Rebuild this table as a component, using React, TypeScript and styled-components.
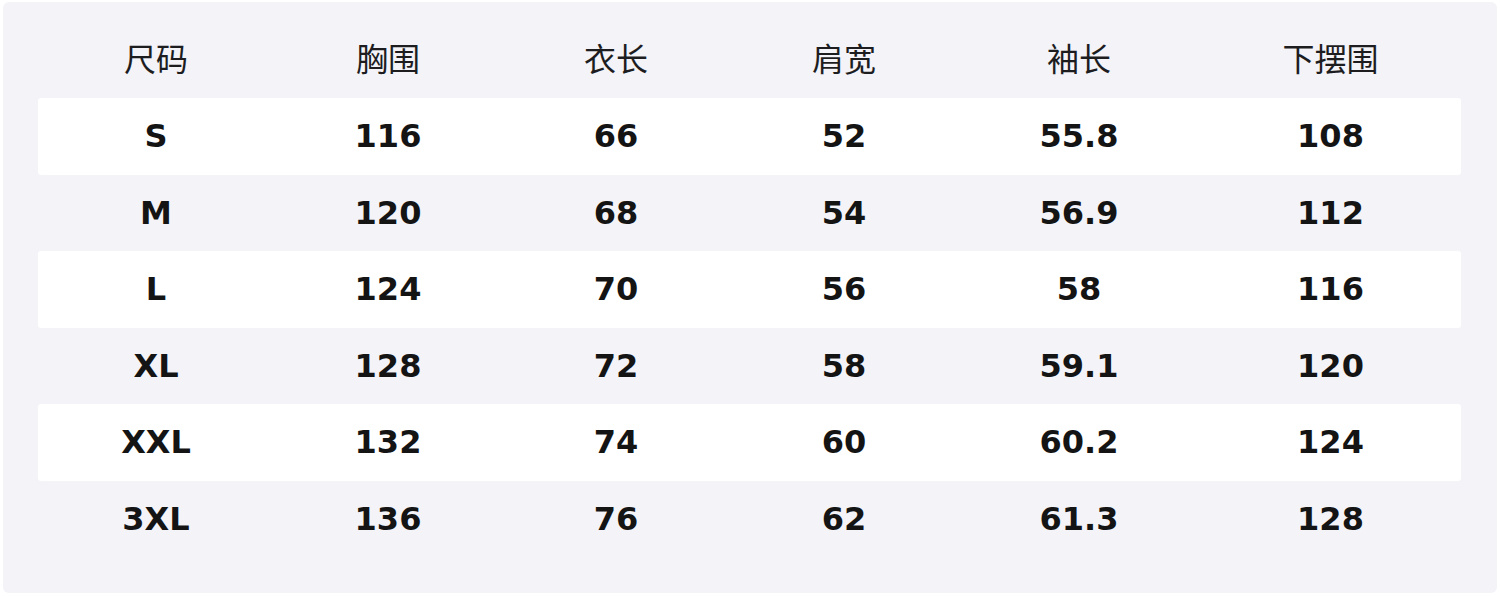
import styled, { createGlobalStyle } from 'styled-components';

const GlobalStyle = createGlobalStyle`
  html, body {
    margin: 0;
    padding: 0;
    background: #ffffff;
  }
`;

const Page = styled.div`
  width: 1500px;
  height: 596px;
  padding: 2px 3px 3px 3px;
  box-sizing: border-box;
`;

const Panel = styled.div`
  height: 100%;
  box-sizing: border-box;
  background: #f3f3f8;
  border-radius: 6px;
  padding: 19.5px 36px 36px 35px;
`;

// column widths measured from the reference
const COLS = '236px 228px 228px 228px 242px 261px';

const Row = styled.div<{ $striped?: boolean }>`
  display: grid;
  grid-template-columns: ${COLS};
  height: 76.5px;
  align-items: center;
  background: ${p => (p.$striped ? '#ffffff' : 'transparent')};
  border-radius: 3px;
`;

const HeadRow = styled(Row)`
  box-sizing: border-box;
  padding-bottom: 5px;
`;

const HeadCell = styled.div`
  text-align: center;
  font-family: "Noto Sans CJK SC", "Noto Sans", sans-serif;
  font-size: 32px;
  font-weight: 400;
  color: #1d1d1f;
  line-height: 1;
`;

const Cell = styled.div`
  text-align: center;
  font-family: "DejaVu Sans", "Noto Sans CJK SC", sans-serif;
  font-size: 32px;
  font-weight: 700;
  color: #141414;
  line-height: 1;
`;

const headers = ['尺码', '胸围', '衣长', '肩宽', '袖长', '下摆围'];

const rows = [
  ['S', '116', '66', '52', '55.8', '108'],
  ['M', '120', '68', '54', '56.9', '112'],
  ['L', '124', '70', '56', '58', '116'],
  ['XL', '128', '72', '58', '59.1', '120'],
  ['XXL', '132', '74', '60', '60.2', '124'],
  ['3XL', '136', '76', '62', '61.3', '128'],
];

const App = () => {
  return (
    <>
      <GlobalStyle />
      <Page>
        <Panel>
          <HeadRow>
            {headers.map(h => (
              <HeadCell key={h}>{h}</HeadCell>
            ))}
          </HeadRow>
          {rows.map((r, i) => (
            <Row key={r[0]} $striped={i % 2 === 0}>
              {r.map((v, j) => (
                <Cell key={j}>{v}</Cell>
              ))}
            </Row>
          ))}
        </Panel>
      </Page>
    </>
  );
};

export default App;
